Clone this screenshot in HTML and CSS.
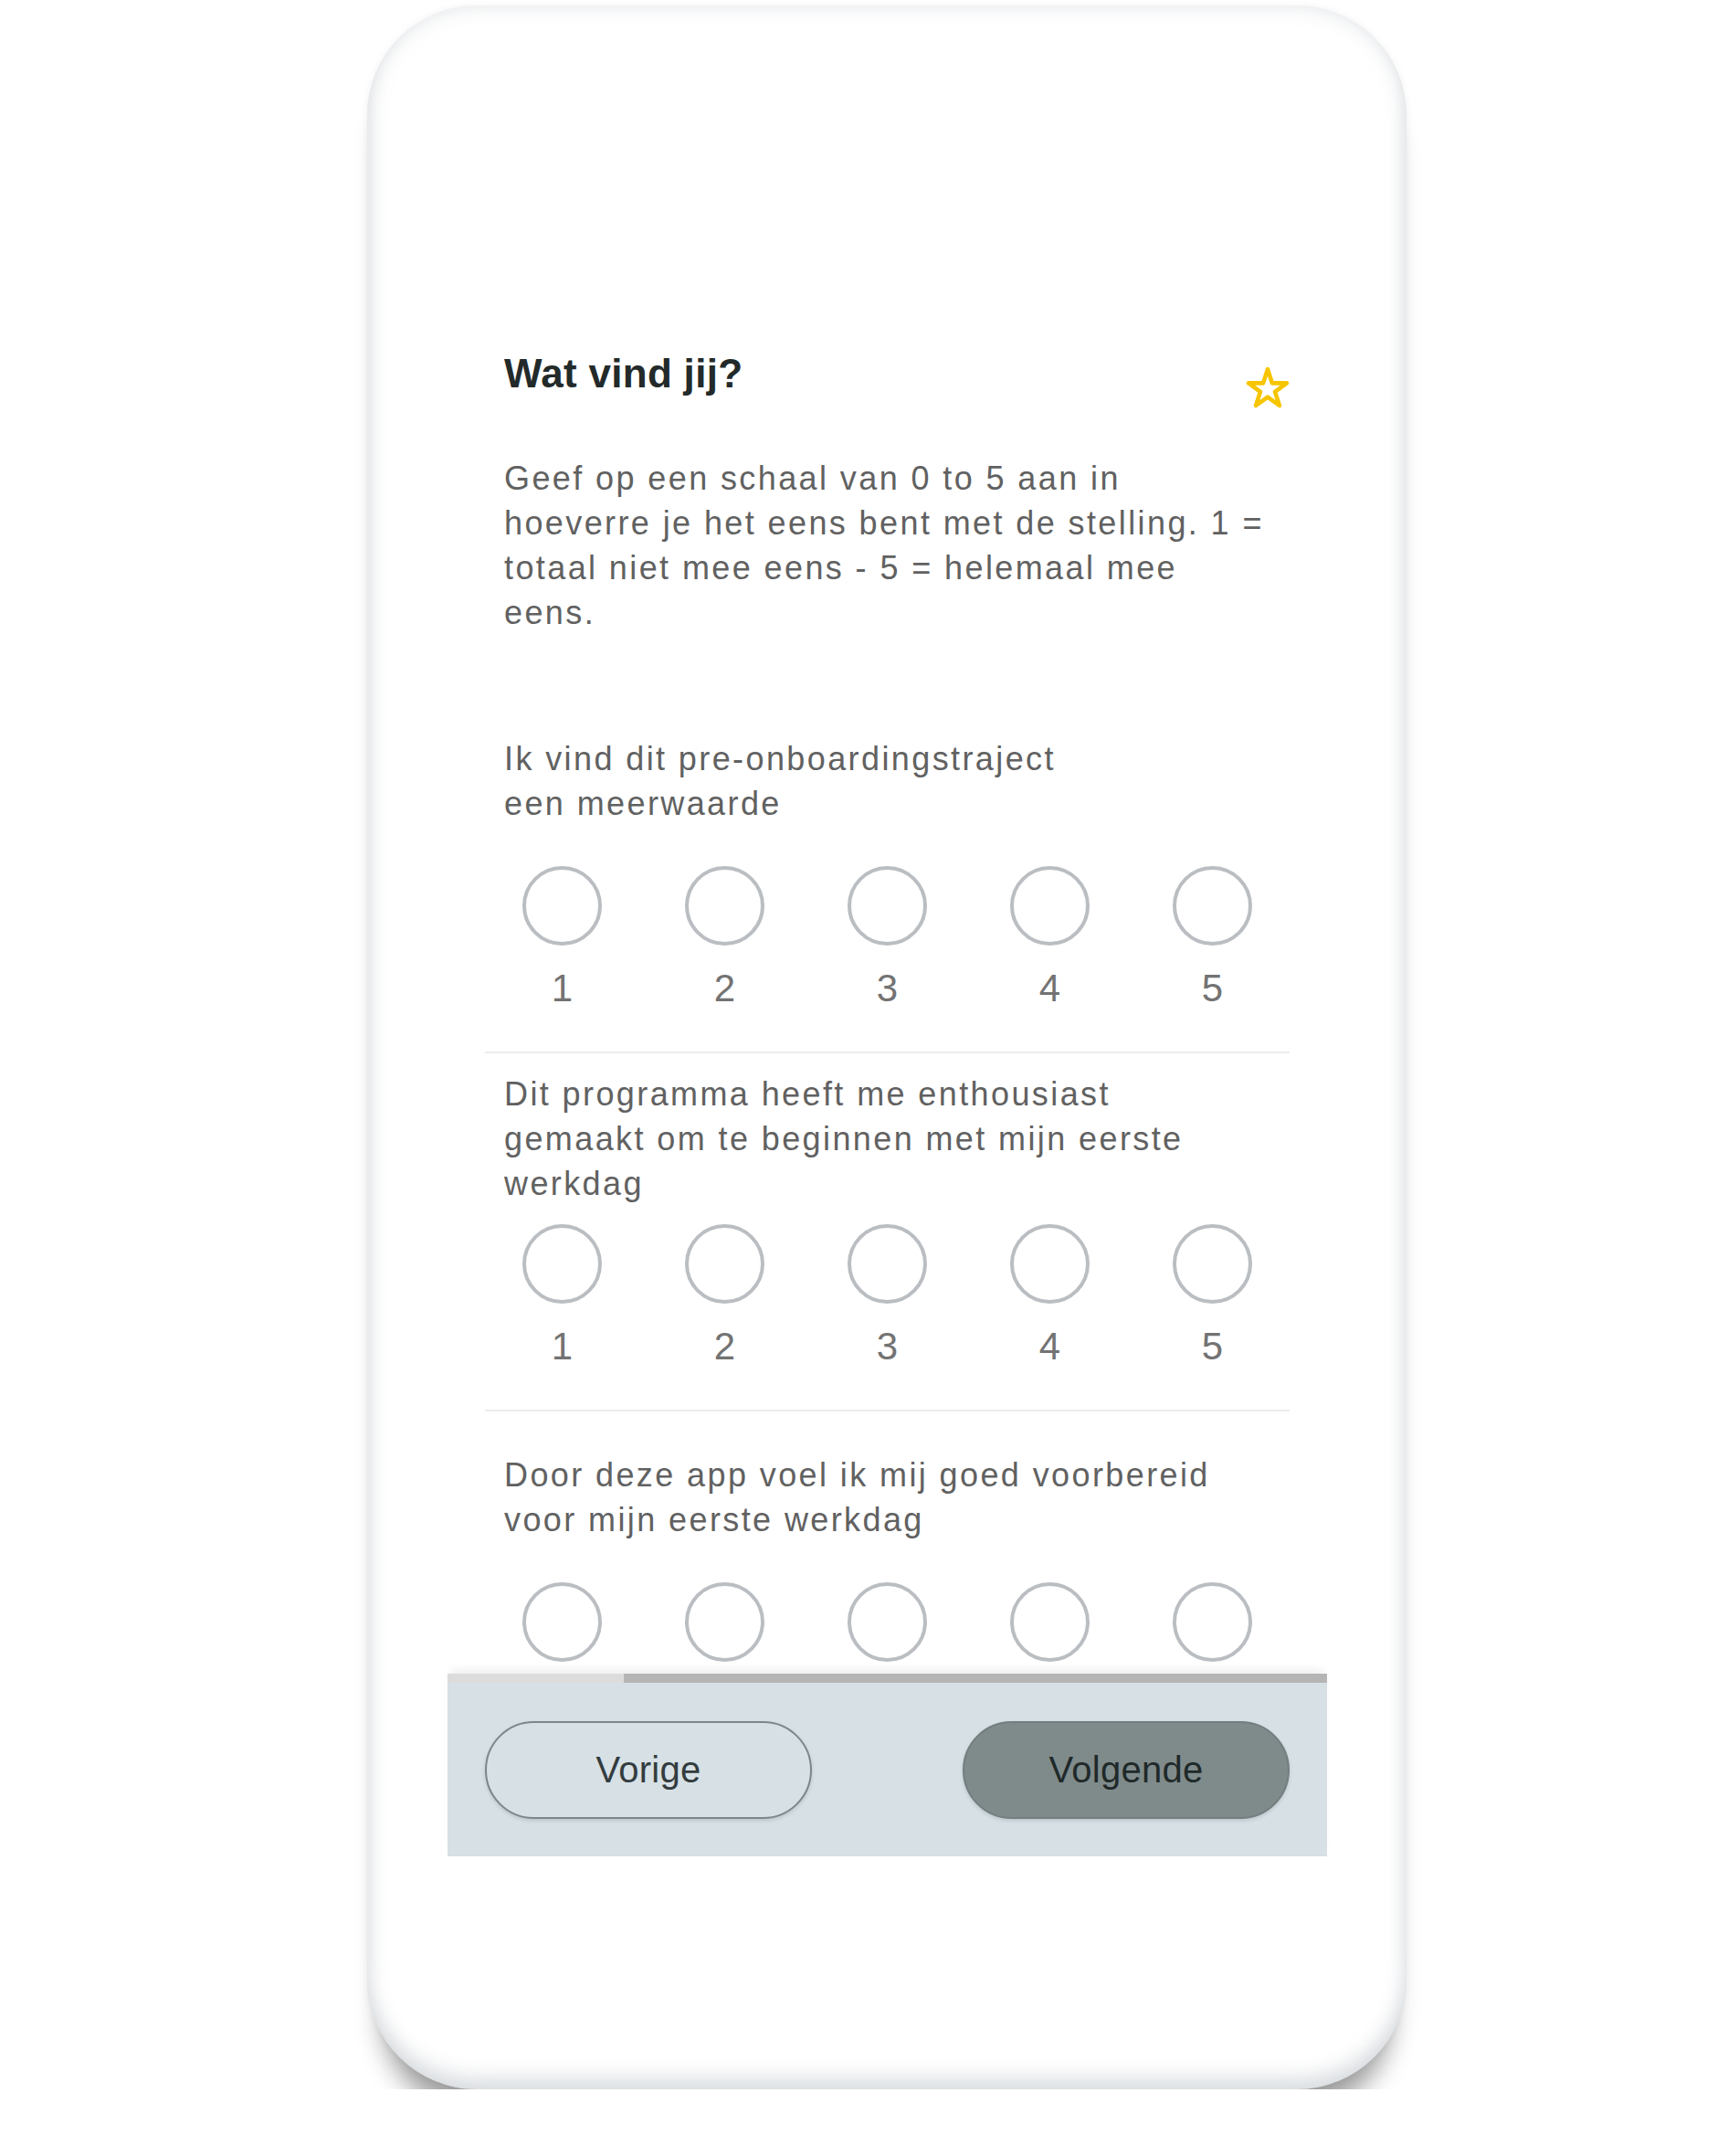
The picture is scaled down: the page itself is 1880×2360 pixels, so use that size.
FILE: index.html
```html
<!DOCTYPE html>
<html lang="nl">
<head>
  <meta charset="UTF-8">
  <title>Wat vind jij?</title>
  <link rel="stylesheet" href="styles.css">
</head>
<body>
  <div class="phone">
    <div class="screen">
      <div class="scroll">
        <div class="head">
          <h1 class="title">Wat vind jij?</h1>
          <svg class="star" viewBox="0 0 24 24" width="48" height="48">
            <polygon points="12,1.6 14.47,9.2 22.46,9.2 15.99,13.9 18.47,21.5 12,16.8 5.53,21.5 8.01,13.9 1.54,9.2 9.53,9.2" />
          </svg>
        </div>

        <p class="intro">Geef op een schaal van 0 to 5 aan in hoeverre je het eens bent met de stelling. 1 = totaal niet mee eens - 5 = helemaal mee eens.</p>

        <div class="question first">
          <p class="q-text">Ik vind dit pre-onboardingstraject<br>een meerwaarde</p>
          <div class="scale">
            <div class="opt"><span class="dot"></span><span class="num">1</span></div>
            <div class="opt"><span class="dot"></span><span class="num">2</span></div>
            <div class="opt"><span class="dot"></span><span class="num">3</span></div>
            <div class="opt"><span class="dot"></span><span class="num">4</span></div>
            <div class="opt"><span class="dot"></span><span class="num">5</span></div>
          </div>
        </div>

        <div class="question">
          <p class="q-text">Dit programma heeft me enthousiast gemaakt om te beginnen met mijn eerste werkdag</p>
          <div class="scale">
            <div class="opt"><span class="dot"></span><span class="num">1</span></div>
            <div class="opt"><span class="dot"></span><span class="num">2</span></div>
            <div class="opt"><span class="dot"></span><span class="num">3</span></div>
            <div class="opt"><span class="dot"></span><span class="num">4</span></div>
            <div class="opt"><span class="dot"></span><span class="num">5</span></div>
          </div>
        </div>

        <div class="question">
          <p class="q-text">Door deze app voel ik mij goed voorbereid voor mijn eerste werkdag</p>
          <div class="scale">
            <div class="opt"><span class="dot"></span><span class="num">1</span></div>
            <div class="opt"><span class="dot"></span><span class="num">2</span></div>
            <div class="opt"><span class="dot"></span><span class="num">3</span></div>
            <div class="opt"><span class="dot"></span><span class="num">4</span></div>
            <div class="opt"><span class="dot"></span><span class="num">5</span></div>
          </div>
        </div>
      </div>

      <div class="footer">
        <div class="progress"><div class="progress-done" style="width: 20%"></div></div>
        <div class="nav">
          <button class="btn btn-prev">Vorige</button>
          <button class="btn btn-next">Volgende</button>
        </div>
      </div>
    </div>
  </div>
</body>
</html>
```

FILE: styles.css
```css
* {
  box-sizing: border-box;
}

body {
  margin: 0;
  background: #fff;
  font-family: "Liberation Sans", Arial, sans-serif;
}

.phone {
  width: 1138px;
  height: 2281px;
  margin: 6px 0 0 402px;
  padding: 0 87px 0 88px;
  border-radius: 120px;
  background: #fff;
  overflow: hidden;
  box-shadow:
    inset 0 0 22px rgba(140, 150, 160, .25),
    inset 0 -16px 20px rgba(140, 150, 160, .2),
    0 40px 28px -16px rgba(0, 0, 0, .38),
    0 0 8px rgba(0, 0, 0, .05);
}

.screen {
  display: flex;
  flex-direction: column;
}

.scroll {
  height: 1826px;
  padding: 377px 41px 0;
  overflow: hidden;
}

/* header */
.head {
  display: flex;
  justify-content: space-between;
  align-items: flex-start;
  height: 52px;
  padding-left: 21px;
}

.title {
  margin: 0;
  font-size: 44px;
  line-height: 52px;
  letter-spacing: .3px;
  font-weight: bold;
  color: #232a2a;
}

.star {
  flex-shrink: 0;
  margin-top: 18px;
  fill: none;
  stroke: #f6c500;
  stroke-width: 2.3;
  stroke-linejoin: round;
}

.intro,
.q-text {
  margin: 0;
  font-size: 36px;
  line-height: 49px;
  letter-spacing: 2.4px;
  color: #616161;
}

.intro {
  margin-top: 64px;
  padding-left: 21px;
  width: 866px;
}

/* questions */
.question {
  padding: 20px 0 44px;
  border-top: 2px solid #ececec;
}

.question.first {
  border-top: none;
  padding-top: 86px;
}

.q-text {
  display: flex;
  align-items: center;
  height: 147px;
  width: 826px;
  padding-left: 21px;
}

.scale {
  display: flex;
  justify-content: space-between;
  width: 799px;
  margin: 20px 0 0 41px;
}

.opt {
  display: flex;
  flex-direction: column;
  align-items: center;
  width: 87px;
}

.dot {
  width: 87px;
  height: 87px;
  border: 4.5px solid #babec2;
  border-radius: 50%;
}

.num {
  margin-top: 22px;
  font-size: 42px;
  line-height: 50px;
  color: #737373;
}

/* footer */
.footer {
  background: #d6e0e5;
  box-shadow: 0 -8px 10px -4px rgba(0, 0, 0, .07);
}

.progress {
  height: 10px;
  background: #b5b5b5;
}

.progress-done {
  height: 100%;
  background: #dcdcdc;
}

.nav {
  display: flex;
  justify-content: space-between;
  padding: 42px 41px 41px;
}

.btn {
  width: 358px;
  height: 107px;
  border-radius: 54px;
  font-family: inherit;
  font-size: 40px;
  letter-spacing: .3px;
  cursor: pointer;
  box-shadow: 0 2px 4px rgba(0, 0, 0, .12);
}

.btn-prev {
  background: #d6e0e5;
  border: 2px solid #7b878a;
  color: #333c3e;
}

.btn-next {
  background: #7f8b8b;
  border: 2px solid #727e7f;
  color: #1f2929;
}
```
